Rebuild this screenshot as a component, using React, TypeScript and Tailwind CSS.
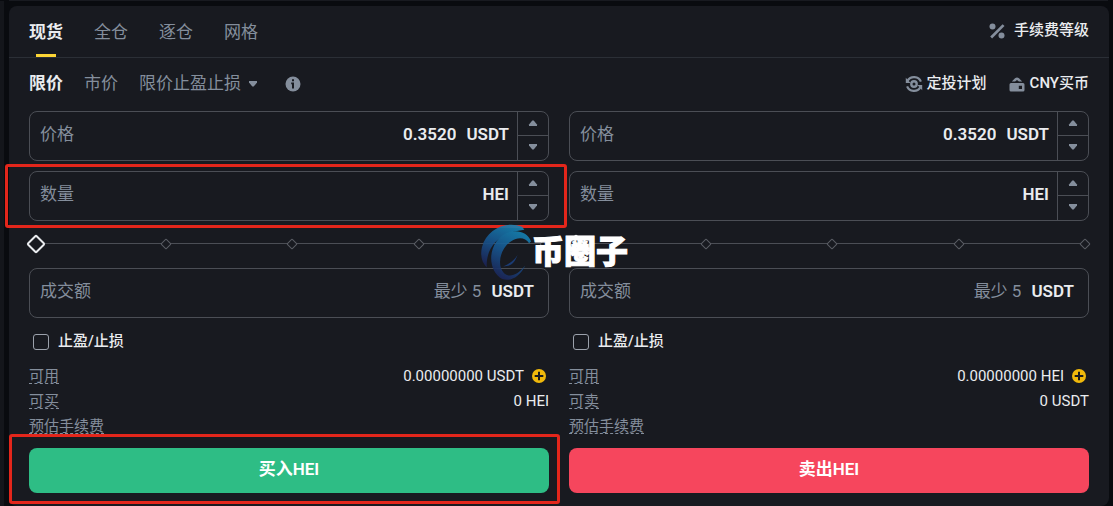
import { useState } from "react";
import type { ReactNode } from "react";
import clsx from "clsx";

type Side = "buy" | "sell";

const tabs = ["现货", "全仓", "逐仓", "网格"];

function PercentIcon() {
  return (
    <svg width="18" height="18" viewBox="0 0 18 18" fill="#848e9c">
      <circle cx="4.5" cy="4.5" r="3" />
      <circle cx="13.5" cy="13.6" r="3" />
      <path d="M14.6 2.2l1.9 1.900L4.100 16.500l-1.900-1.900z" />
    </svg>
  );
}

function PlanIcon() {
  return (
    <svg width="18" height="18" viewBox="0 0 18 18" fill="none" stroke="#848e9c" strokeWidth="2.2">
      <path d="M2.600 5.600A7.400 7 0 0 1 15.900 6.600" />
      <path d="M15.400 12.400A7.400 7 0 0 1 2.100 11.400" />
      <circle cx="9" cy="9" r="2.700" strokeWidth="2.400" />
      <path d="M.8 2.800v5.200h4.800zM17.200 15.200V10h-4.800z" fill="#848e9c" stroke="none" />
    </svg>
  );
}

function WalletIcon() {
  return (
    <svg width="18" height="18" viewBox="0 0 18 18" fill="#848e9c">
      <path d="M3.800 6.600L7 3.200Q9 1.600 11 3.200l3.200 3.400h-3.300L9 4.900 7.100 6.600z" />
      <path
        fillRule="evenodd"
        d="M1.500 9.500q0-1.500 1.500-1.500h12q1.500 0 1.500 1.500v5.500q0 1.500-1.500 1.500h-12q-1.500 0-1.500-1.500zM10.800 10.800v3.200h3.200v-3.200z"
      />
    </svg>
  );
}

function InfoIcon() {
  return (
    <svg width="16" height="16" viewBox="0 0 16 16">
      <circle cx="8" cy="8" r="7.500" fill="#848e9c" />
      <path d="M7 3.300h2v2H7zM6.200 6.600H9v6H7V8.300h-.8z" fill="#181a20" />
    </svg>
  );
}

function PlusIcon() {
  return (
    <svg width="14" height="14" viewBox="0 0 14 14">
      <circle cx="7" cy="7" r="7" fill="#f0b90b" />
      <path d="M7 2.700v8.600M2.700 7h8.600" stroke="#181a20" strokeWidth="2" />
    </svg>
  );
}

function Caret({ down }: { down?: boolean }) {
  return (
    <svg width="10" height="6" viewBox="0 0 10 6" fill="#848e9c" className={clsx(down && "rotate-180")}>
      <path d="M4.300.5h1.400L9 4.600V6H1V4.600z" />
    </svg>
  );
}

function Highlight({ className }: { className: string }) {
  return (
    <div
      className={clsx(
        "pointer-events-none absolute z-10 rounded-[3px] border-3 border-[#e3261b]",
        className
      )}
    />
  );
}

function NumberField({
  id,
  label,
  unit,
  initial,
  children,
}: {
  id: string;
  label: string;
  unit: string;
  initial: string;
  children?: ReactNode;
}) {
  const [value, setValue] = useState(initial);

  const step = (delta: number) => {
    setValue((v) => Math.max(0, Number(v || 0) + delta).toFixed(4));
  };

  return (
    <div className="relative">
      <div className="flex h-[50px] overflow-hidden rounded-lg border border-[#4b4e55]">
        <div className="flex min-w-0 flex-1 items-center px-2 pb-[2px] pl-[10px] text-[17px]">
          <label htmlFor={id} className="shrink-0 text-[#848e9c]">
            {label}
          </label>
          <input
            id={id}
            value={value}
            onChange={(e) => setValue(e.target.value)}
            className="w-0 flex-1 bg-transparent text-right font-semibold outline-none"
          />
          <span className="ml-[10px] font-semibold">{unit}</span>
        </div>
        <div className="flex w-[31px] flex-col border-l border-[#4b4e55]">
          <button
            type="button"
            aria-label={`${label} +`}
            onClick={() => step(0.0001)}
            className="flex flex-1 items-center justify-center border-b border-[#4b4e55]"
          >
            <Caret />
          </button>
          <button
            type="button"
            aria-label={`${label} -`}
            onClick={() => step(-0.0001)}
            className="flex flex-1 items-center justify-center pb-[2px]"
          >
            <Caret down />
          </button>
        </div>
      </div>
      {children}
    </div>
  );
}

function PercentSlider({ label }: { label: string }) {
  const [percent, setPercent] = useState(0);

  return (
    <div className="relative flex h-[47px] items-center pb-[2px]">
      <div className="absolute inset-x-1 h-px bg-[#4b4e55]" />
      <div className="relative flex flex-1 items-center justify-between pl-[6px]">
        {[0, 25, 50, 75, 100].map((mark) => (
          <span key={mark} className="size-2 rotate-45 rounded-[1px] border border-[#5a5d64] bg-[#181a20]" />
        ))}
      </div>
      <input
        type="range"
        aria-label={label}
        min={0}
        max={100}
        value={percent}
        onChange={(e) => setPercent(Number(e.target.value))}
        className="absolute inset-x-0 h-5 w-full cursor-pointer appearance-none bg-transparent [&::-webkit-slider-thumb]:size-[14px] [&::-webkit-slider-thumb]:rotate-45 [&::-webkit-slider-thumb]:appearance-none [&::-webkit-slider-thumb]:rounded-[2px] [&::-webkit-slider-thumb]:border-2 [&::-webkit-slider-thumb]:border-[#eaecef] [&::-webkit-slider-thumb]:bg-[#181a20]"
      />
    </div>
  );
}

function InfoRow({ label, children }: { label: string; children?: ReactNode }) {
  return (
    <div className="flex h-[25px] items-center justify-between text-[15px] leading-5">
      <span className="text-[#848e9c] underline decoration-dashed decoration-1 underline-offset-2">{label}</span>
      <span className="flex items-center">{children}</span>
    </div>
  );
}

function OrderForm({ side }: { side: Side }) {
  const isBuy = side === "buy";

  return (
    <form className="min-w-0 flex-1" onSubmit={(e) => e.preventDefault()}>
      <div className="flex flex-col gap-[10px]">
        <NumberField id={`${side}-price`} label="价格" unit="USDT" initial="0.3520" />
        <NumberField id={`${side}-amount`} label="数量" unit="HEI" initial="">
          {isBuy && <Highlight className="-top-[7px] -right-[18px] -bottom-[7px] -left-6" />}
        </NumberField>
      </div>

      <PercentSlider label={isBuy ? "买入HEI" : "卖出HEI"} />

      <div className="flex h-[50px] items-center rounded-lg border border-[#4b4e55] pr-[14px] pb-[2px] pl-[10px] text-[17px]">
        <label htmlFor={`${side}-total`} className="shrink-0 text-[#848e9c]">
          成交额
        </label>
        <input
          id={`${side}-total`}
          placeholder="最少 5"
          className="w-0 flex-1 bg-transparent text-right outline-none placeholder:text-[#848e9c]"
        />
        <span className="ml-[10px] font-semibold">USDT</span>
      </div>

      <label className="mt-[11px] flex h-6 items-center gap-[9px] pl-1 text-[15px] font-medium">
        <input
          type="checkbox"
          className="mt-[2px] size-4 appearance-none rounded-[3px] border border-[#9ba1ab] checked:bg-[#eaecef]"
        />
        止盈/止损
      </label>

      <div className="mt-[10px] mb-[10px]">
        <InfoRow label="可用">
          0.00000000 {isBuy ? "USDT" : "HEI"}
          <button type="button" aria-label="+" className="mr-[3px] ml-2">
            <PlusIcon />
          </button>
        </InfoRow>
        <InfoRow label={isBuy ? "可买" : "可卖"}>{isBuy ? "0 HEI" : "0 USDT"}</InfoRow>
        <InfoRow label="预估手续费" />
      </div>

      <div className="relative">
        <button
          type="submit"
          className={clsx(
            "h-[45px] w-full rounded-lg pb-[2px] text-[17px] font-semibold text-white",
            isBuy ? "bg-[#2ebd85]" : "bg-[#f6465d]"
          )}
        >
          {isBuy ? "买入HEI" : "卖出HEI"}
        </button>
        {isBuy && <Highlight className="-top-[14px] -right-[11px] -bottom-[11px] -left-5" />}
      </div>
    </form>
  );
}

function Watermark() {
  return (
    <div className="pointer-events-none absolute inset-x-0 top-[216px] z-20 flex items-center justify-center pr-[10px]">
      <svg width="52" height="60" viewBox="0 0 54 60" opacity="0.9">
        <defs>
          <linearGradient id="swirl" x1="0.700" y1="0" x2="0.300" y2="1">
            <stop offset="0" stopColor="#1583b4" />
            <stop offset="0.500" stopColor="#17558f" />
            <stop offset="1" stopColor="#1c2558" />
          </linearGradient>
        </defs>
        <path d="M44 4C28-3 7 6 2 25c-2 9 0 16 5 21C6 26 18 10 46 7z" fill="url(#swirl)" />
        <path
          d="M53 19C48 5 27 5 17 19c-10 15-5 33 6 39 9 3 18-2 24-14-8 10-16 13-22 8-8-8-4-26 7-33 8-5 15-4 19 2z"
          fill="url(#swirl)"
        />
        <path d="M24 45c7-3 11-6 15-12-3 8-7 12-15 12z" fill="#1c3f7c" />
      </svg>
      <span className="text-[32px] leading-[60px] font-black text-white [-webkit-text-stroke:1px_white]">
        币圈子
      </span>
    </div>
  );
}

export default function App() {
  const [activeTab, setActiveTab] = useState("现货");

  return (
    <div className="flex min-h-screen flex-col bg-[#090b0f] font-['Roboto','Noto_Sans_CJK_SC',sans-serif] text-[#eaecef]">
      <div className="mr-[5px] ml-[9px] h-px bg-[#181a20]" />
      <div className="flex flex-1">
        <div className="w-1 bg-[#14161b]" />
        <main className="relative mt-[5px] mr-1 ml-[5px] flex-1 rounded-lg bg-[#181a20]">
          <header className="flex h-[52px] items-center justify-between border-b border-[#2b2f36] px-5">
            <nav className="flex h-full gap-[31px] text-[17px]">
              {tabs.map((tab) => (
                <button
                  key={tab}
                  type="button"
                  onClick={() => setActiveTab(tab)}
                  className={clsx(
                    "relative h-full pt-[2px]",
                    tab === activeTab ? "font-bold" : "text-[#848e9c]"
                  )}
                >
                  {tab}
                  {tab === activeTab && (
                    <span className="absolute bottom-0 left-1/2 h-[3px] w-5 -translate-x-1/2 bg-[#fcd535]" />
                  )}
                </button>
              ))}
            </nav>
            <a href="#fees" className="flex items-center gap-2 pb-[2px] text-[15px] font-medium">
              <PercentIcon />
              手续费等级
            </a>
          </header>

          <div className="px-5">
            <div className="flex h-[53px] items-center justify-between pb-[2px]">
              <div className="flex items-center gap-[21px] text-[17px] text-[#848e9c]">
                <button type="button" className="font-bold text-[#eaecef]">
                  限价
                </button>
                <button type="button">市价</button>
                <button type="button" className="flex items-center gap-[7px]">
                  限价止盈止损
                  <Caret down />
                </button>
                <button type="button" aria-label="限价" className="ml-[6px]">
                  <InfoIcon />
                </button>
              </div>
              <div className="flex items-center gap-[21px] text-[15px] font-medium">
                <a href="#plan" className="flex items-center gap-1">
                  <PlanIcon />
                  定投计划
                </a>
                <a href="#buy-cny" className="flex items-center gap-1">
                  <WalletIcon />
                  CNY买币
                </a>
              </div>
            </div>

            <div className="flex gap-5">
              <OrderForm side="buy" />
              <OrderForm side="sell" />
            </div>
          </div>

          <Watermark />
        </main>
      </div>
    </div>
  );
}
